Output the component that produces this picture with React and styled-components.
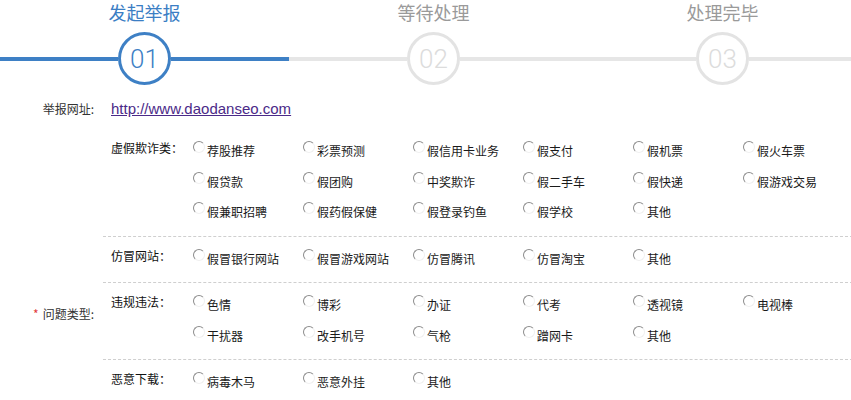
import styled, { createGlobalStyle } from "styled-components";

const GlobalStyle = createGlobalStyle`
  body {
    margin: 0;
    background: #fff;
    font-family: "Noto Sans CJK SC", "Liberation Sans", sans-serif;
  }
`;

const Page = styled.div`
  width: 851px;
  overflow: hidden;
`;

const StepBar = styled.div`
  display: flex;
  height: 86px;
  padding-top: 1px;
  box-sizing: border-box;
`;

const Step = styled.div`
  width: 289px;
  flex-shrink: 0;
  display: flex;
  flex-direction: column;
  align-items: center;
`;

const StepTitle = styled.div`
  font-size: 18px;
  line-height: 22px;
  color: ${props => (props.$active ? "#3b7ec4" : "#9a9a9a")};
`;

const Track = styled.div`
  width: 100%;
  height: 53px;
  margin-top: 9px;
  display: flex;
  align-items: center;
`;

const Line = styled.div`
  flex: 1;
  height: 4px;
  background: ${props => (props.$active ? "#3e80c5" : "#e6e6e6")};
`;

const Circle = styled.div`
  width: 53px;
  height: 53px;
  box-sizing: border-box;
  border-radius: 50%;
  border: 3px solid ${props => (props.$active ? "#3e80c5" : "#e3e3e3")};
  display: flex;
  align-items: center;
  justify-content: center;
  font-family: Roboto, "Liberation Sans", sans-serif;
  font-weight: 300;
  font-size: 26px;
  color: ${props => (props.$active ? "#3e80c5" : "#dcdcdc")};
`;

const FormRow = styled.div`
  display: flex;
  align-items: ${props => (props.$top ? "flex-start" : "center")};
  margin-top: ${props => props.$mt || 0}px;
`;

const FieldLabel = styled.div`
  width: 103px;
  flex-shrink: 0;
  box-sizing: border-box;
  padding-right: 9px;
  padding-top: ${props => props.$pt || 0}px;
  text-align: right;
  font-size: 12px;
  line-height: 20px;
  color: #333;
`;

const Star = styled.span`
  color: #e23b3b;
  margin-right: 4px;
`;

const UrlLink = styled.a`
  margin-left: 8px;
  font-family: "Liberation Sans", Arial, sans-serif;
  font-size: 15px;
  line-height: 30px;
  color: #4b2a88;
  text-decoration: underline;
`;

const Groups = styled.div`
  flex: 1;
`;

const Group = styled.div`
  display: flex;
  align-items: flex-start;
  padding: 7px 0 8px;
  border-bottom: ${props => (props.$last ? "none" : "1px dashed #cfcfcf")};
`;

const GroupLabel = styled.div`
  width: 90px;
  flex-shrink: 0;
  box-sizing: border-box;
  padding-left: 8px;
  font-size: 12px;
  line-height: 24px;
  color: #111;
`;

const OptionGrid = styled.div`
  display: grid;
  grid-template-columns: repeat(6, 110px);
  grid-auto-rows: 30.5px;
`;

const Option = styled.label`
  display: flex;
  align-items: flex-start;
  font-size: 12px;
  line-height: 30px;
  color: #1a1a1a;
  white-space: nowrap;
`;

const Radio = styled.span`
  width: 12px;
  height: 12px;
  box-sizing: border-box;
  margin-top: 5px;
  margin-right: 2px;
  border-radius: 50%;
  border: 1px solid;
  border-color: #8c8c8c #f0f0f0 #f0f0f0 #8c8c8c;
  flex-shrink: 0;
`;

const steps = [
  { title: "发起举报", num: "01", active: true },
  { title: "等待处理", num: "02" },
  { title: "处理完毕", num: "03" },
];

const groups = [
  {
    label: "虚假欺诈类：",
    items: [
      "荐股推荐", "彩票预测", "假信用卡业务", "假支付", "假机票", "假火车票",
      "假贷款", "假团购", "中奖欺诈", "假二手车", "假快递", "假游戏交易",
      "假兼职招聘", "假药假保健", "假登录钓鱼", "假学校", "其他",
    ],
  },
  {
    label: "仿冒网站：",
    items: ["假冒银行网站", "假冒游戏网站", "仿冒腾讯", "仿冒淘宝", "其他"],
  },
  {
    label: "违规违法：",
    items: [
      "色情", "博彩", "办证", "代考", "透视镜", "电视棒",
      "干扰器", "改手机号", "气枪", "蹭网卡", "其他",
    ],
  },
  {
    label: "恶意下载：",
    items: ["病毒木马", "恶意外挂", "其他"],
  },
];

const App = () => {
  return (
    <Page>
      <GlobalStyle />
      <StepBar>
        {steps.map(s => (
          <Step key={s.num}>
            <StepTitle $active={s.active}>{s.title}</StepTitle>
            <Track>
              <Line $active={s.active} />
              <Circle $active={s.active}>{s.num}</Circle>
              <Line $active={s.active} />
            </Track>
          </Step>
        ))}
      </StepBar>

      <FormRow $mt={8}>
        <FieldLabel>举报网址:</FieldLabel>
        <UrlLink href="#">http://www.daodanseo.com</UrlLink>
      </FormRow>

      <FormRow $top $mt={5}>
        <FieldLabel $pt={175}>
          <Star>*</Star>问题类型:
        </FieldLabel>
        <Groups>
          {groups.map((g, i) => (
            <Group key={g.label} $last={i === groups.length - 1}>
              <GroupLabel>{g.label}</GroupLabel>
              <OptionGrid>
                {g.items.map((item, j) => (
                  <Option key={j}>
                    <Radio />
                    {item}
                  </Option>
                ))}
              </OptionGrid>
            </Group>
          ))}
        </Groups>
      </FormRow>
    </Page>
  );
};

export default App;
